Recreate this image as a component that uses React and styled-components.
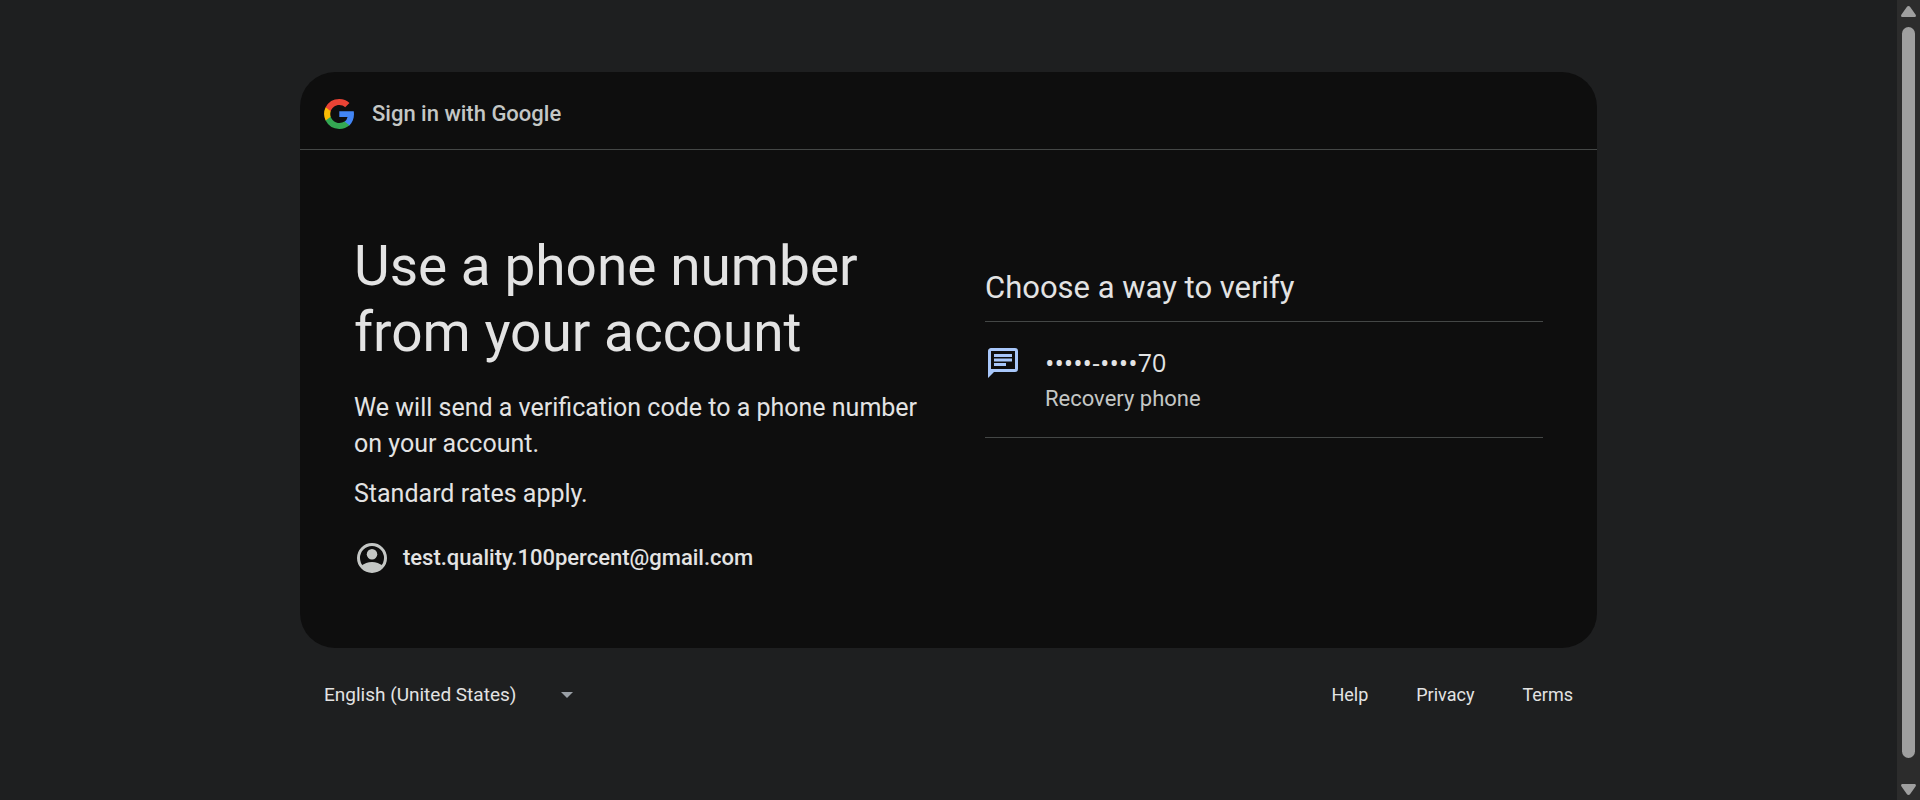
import React from "react";
import styled, { createGlobalStyle } from "styled-components";

const GlobalStyle = createGlobalStyle`
  * { box-sizing: border-box; }
  body {
    margin: 0;
    background: #1e1f20;
    color: #e3e3e3;
    font-family: Roboto, "Liberation Sans", sans-serif;
  }
  h1, h2, p, ul { margin: 0; padding: 0; }
`;

const Page = styled.div`
  display: flex;
  min-height: 100vh;
`;

const Content = styled.main`
  flex: 1;
  min-width: 0;
  padding: 72px 24px 0;
`;

const Column = styled.div`
  max-width: 1297px;
  margin: 0 auto;
`;

const Card = styled.section`
  background: #0e0e0e;
  border-radius: 35px;
  overflow: hidden;
`;

const CardHeader = styled.header`
  display: flex;
  align-items: center;
  gap: 18px;
  padding: 27px 24px 20px;
  border-bottom: 1px solid #444746;
  color: #c4c7c5;
  font-size: 22px;
  font-weight: 500;
  line-height: 30px;
`;

const CardBody = styled.div`
  display: grid;
  grid-template-columns: 1fr 1fr;
  gap: 73px;
  padding: 83px 54px 75px;
`;

const Intro = styled.div`
  margin-right: -24px;
`;

const Title = styled.h1`
  margin-bottom: 25px;
  font-size: 55px;
  font-weight: 400;
  line-height: 66px;
`;

const Paragraph = styled.p`
  margin-bottom: 14px;
  font-size: 25px;
  line-height: 36px;
`;

const Account = styled.div`
  display: flex;
  align-items: center;
  gap: 16px;
  margin-top: 31px;
  padding-left: 3px;
  font-size: 22px;
  font-weight: 500;
  line-height: 30px;
`;

const Choices = styled.div`
  padding-top: 36px;
`;

const ChoicesTitle = styled.h2`
  padding-bottom: 14px;
  border-bottom: 1px solid #444746;
  font-size: 31px;
  font-weight: 400;
  line-height: 38px;
`;

const ChoiceList = styled.ul`
  list-style: none;
`;

const Choice = styled.button`
  display: flex;
  align-items: flex-start;
  gap: 27px;
  width: 100%;
  padding: 22px 3px;
  border: 0;
  border-bottom: 1px solid #444746;
  background: none;
  color: inherit;
  font: inherit;
  text-align: left;
  cursor: pointer;

  svg { margin-top: 4px; }
`;

const ChoiceText = styled.span`
  display: flex;
  flex-direction: column;
  gap: 2px;
`;

const ChoiceName = styled.span`
  font-family: "Open Sans", Roboto, sans-serif;
  font-size: 25px;
  line-height: 36px;
`;

const ChoiceHint = styled.span`
  color: #c4c7c5;
  font-size: 22px;
  line-height: 33px;
`;

const Footer = styled.footer`
  display: flex;
  align-items: center;
  justify-content: space-between;
  padding: 32px 24px;
`;

const Language = styled.label`
  display: grid;
  align-items: center;
  width: 260px;

  & > * { grid-area: 1 / 1; }
  svg { justify-self: end; margin-right: 11px; pointer-events: none; }
`;

const LanguageSelect = styled.select`
  appearance: none;
  width: 100%;
  padding: 0;
  border: 0;
  background: none;
  color: #e3e3e3;
  font-family: inherit;
  font-size: 19px;
  line-height: 30px;
`;

const FooterLinks = styled.nav`
  display: flex;
  gap: 48px;
`;

const FooterLink = styled.a`
  color: #e3e3e3;
  font-size: 18px;
  line-height: 30px;
  text-decoration: none;
`;

const ScrollRail = styled.aside`
  display: flex;
  flex-direction: column;
  align-items: center;
  gap: 10px;
  width: 23px;
  padding: 6px 0 5px;
  background: #2c2c2c;
`;

const ScrollThumb = styled.div`
  flex: 1;
  width: 13px;
  margin-bottom: 16px;
  border-radius: 7px;
  background: #9f9f9f;
`;

const GoogleLogo = () => (
  <svg width="30" height="30" viewBox="0 0 48 48" aria-hidden="true">
    <path fill="#4285F4" d="M48 24.55c0-1.7-.15-3.34-.44-4.91H24.48v9.29h13.2a11.3 11.3 0 0 1-4.9 7.4v6.04h7.78C45.13 38.14 48 31.93 48 24.55z" />
    <path fill="#34A853" d="M24.48 48c6.6 0 12.14-2.15 16.19-5.83l-7.87-6.1c-2.2 1.47-5 2.35-8.32 2.35-6.39 0-11.81-4.32-13.75-10.12H2.62v6.29A24.46 24.46 0 0 0 24.48 48z" />
    <path fill="#FBBC05" d="M10.73 28.3a14.4 14.4 0 0 1 0-8.83v-6.08H2.62a24 24 0 0 0 0 21z" />
    <path fill="#EA4335" d="M24.48 9.49c3.6 0 6.82 1.24 9.36 3.66l6.92-6.92C36.6 2.38 31.08 0 24.48 0A24.46 24.46 0 0 0 2.62 13.39l8.11 6.2c1.94-5.8 7.36-10.1 13.75-10.1z" />
  </svg>
);

const AccountIcon = () => (
  <svg width="30" height="30" viewBox="2 2 20 20" aria-hidden="true">
    <circle cx="12" cy="12" r="9" fill="none" stroke="#c4c7c5" strokeWidth="2" />
    <path fill="#c4c7c5" d="M5 17.2C6.800 15.500 9.300 14.600 12 14.600s5.200.9 7 2.600C17.500 19.600 15 21.500 12 21.500s-5.500-1.900-7-4.300z" />
    <circle cx="12" cy="9.500" r="3.500" fill="#c4c7c5" />
  </svg>
);

const MessageIcon = () => (
  <svg width="30" height="30" viewBox="2 2 20 20" fill="#a8c7fa" aria-hidden="true">
    <path d="M4 2h16a2 2 0 0 1 2 2v12a2 2 0 0 1-2 2H6l-4 4V4c0-1.1.9-2 2-2zm0 2v12h16V4z" />
    <path d="M6 12h8v2H6zM6 9h12v2H6zM6 6h12v2H6z" />
  </svg>
);

const CaretIcon = () => (
  <svg width="12" height="6" viewBox="0 0 12 6" fill="#9aa0a6" aria-hidden="true">
    <path d="M0 0h12L6 6z" />
  </svg>
);

const ScrollArrow = ({ down }) => (
  <svg width="15" height="11" viewBox="0 0 15 11" fill="#9f9f9f" aria-hidden="true">
    <path
      d={
        down
          ? "M1.5 0h12c1.3 0 1.9 1.4 1 2.4L9.2 10c-.9 1.3-2.5 1.3-3.4 0L.5 2.4C-.4 1.4.2 0 1.5 0z"
          : "M1.5 11h12c1.3 0 1.9-1.4 1-2.4L9.2 1C8.3-.3 6.7-.3 5.8 1L.5 8.6C-.4 9.6.2 11 1.5 11z"
      }
    />
  </svg>
);

export default function App() {
  return (
    <>
      <GlobalStyle />
      <Page>
        <Content>
          <Column>
            <Card>
              <CardHeader>
                <GoogleLogo />
                <span>Sign in with Google</span>
              </CardHeader>
              <CardBody>
                <Intro>
                  <Title>Use a phone number from your account</Title>
                  <Paragraph>We will send a verification code to a phone number on your account.</Paragraph>
                  <Paragraph>Standard rates apply.</Paragraph>
                  <Account>
                    <AccountIcon />
                    <span>test.quality.100percent@gmail.com</span>
                  </Account>
                </Intro>
                <Choices>
                  <ChoicesTitle>Choose a way to verify</ChoicesTitle>
                  <ChoiceList>
                    <li>
                      <Choice type="button">
                        <MessageIcon />
                        <ChoiceText>
                          <ChoiceName>•••••-••••70</ChoiceName>
                          <ChoiceHint>Recovery phone</ChoiceHint>
                        </ChoiceText>
                      </Choice>
                    </li>
                  </ChoiceList>
                </Choices>
              </CardBody>
            </Card>
            <Footer>
              <Language>
                <LanguageSelect aria-label="Language" defaultValue="en-US">
                  <option value="en-US">English (United States)</option>
                </LanguageSelect>
                <CaretIcon />
              </Language>
              <FooterLinks>
                <FooterLink href="#help">Help</FooterLink>
                <FooterLink href="#privacy">Privacy</FooterLink>
                <FooterLink href="#terms">Terms</FooterLink>
              </FooterLinks>
            </Footer>
          </Column>
        </Content>
        <ScrollRail aria-hidden="true">
          <ScrollArrow />
          <ScrollThumb />
          <ScrollArrow down />
        </ScrollRail>
      </Page>
    </>
  );
}
